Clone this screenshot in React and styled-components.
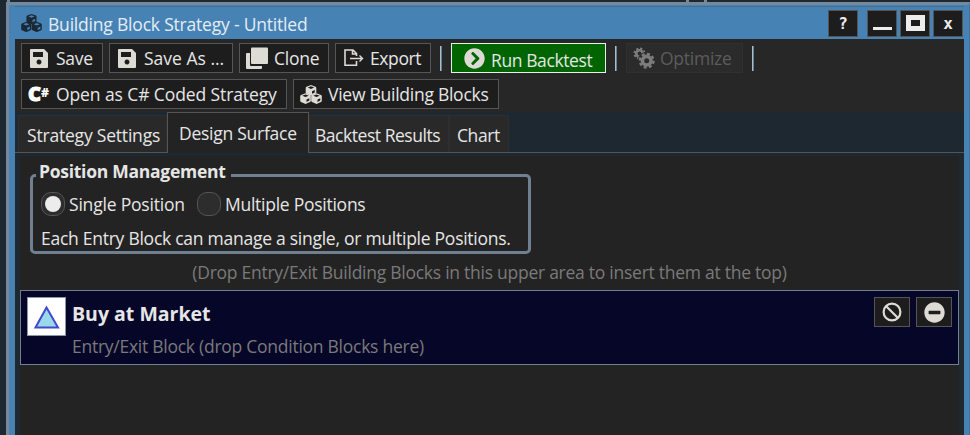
import React, { useState } from 'react';
import styled, { createGlobalStyle } from 'styled-components';
import { FaChevronCircleRight, FaMinusCircle } from 'react-icons/fa';

const GlobalStyle = createGlobalStyle`
  * {
    box-sizing: border-box;
  }
  body {
    margin: 0;
    background: #1e2830;
    font-family: 'Open Sans', 'Noto Sans', sans-serif;
    overflow: hidden;
  }
  button {
    font-family: inherit;
  }
`;

const Desktop = styled.div`
  height: 435px;
  padding-left: 6px;
  background: #1e2830;
`;

const BackgroundEdge = styled.div`
  display: flex;
  height: 2px;
  padding-left: 1px;
`;

const EdgeMark = styled.div`
  width: 3px;
  margin-right: ${({ $gap }) => $gap || 0}px;
  background: #778899;
`;

const Window = styled.div`
  display: flex;
  flex-direction: column;
  width: 964px;
  height: 433px;
  border-top: 3px solid #778899;
  border-left: 3px solid #778899;
  border-right: 1px solid #41709a;
  padding: 1px 5px 0 6px;
  background: #4682b4;
`;

const TitleBar = styled.div`
  display: flex;
  align-items: center;
  gap: 6px;
  height: 33px;
  flex: none;
  padding: 0 0 0 6px;
  border-top: 1px solid #3d6f99;
  color: #1c2834;
`;

const Label = styled.span`
  display: block;
  font-size: ${({ $size }) => $size || 17.5}px;
  line-height: ${({ $line }) => $line || 24}px;
  font-weight: ${({ $bold }) => ($bold ? 700 : 400)};
  letter-spacing: ${({ $track }) => $track ?? -0.26}px;
  padding-top: ${({ $drop }) => $drop || 0}px;
  color: ${({ $color }) => $color || '#e6e6e6'};
  white-space: nowrap;
`;

const WindowButtons = styled.div`
  display: flex;
  margin: 0 1px 0 auto;
`;

const WindowButton = styled.button`
  display: flex;
  align-items: center;
  justify-content: center;
  width: 30px;
  height: 27px;
  padding: 0;
  margin-left: ${({ $gap }) => $gap || 0}px;
  background: #1d1d1d;
  border: 1px solid #555;
  color: #ececec;
  font: 700 16px 'DejaVu Sans Mono', monospace;
`;

const Client = styled.div`
  display: flex;
  flex-direction: column;
  flex: 1;
  background: #272727;
`;

const Toolbar = styled.div`
  display: flex;
  flex-direction: column;
  gap: 6px;
  height: 73px;
  flex: none;
  padding: 4px 6px 0;
`;

const ToolRow = styled.div`
  display: flex;
  align-items: center;
  gap: 6px;
`;

const ToolButton = styled.button`
  display: flex;
  align-items: center;
  width: ${({ $width }) => $width}px;
  height: 30px;
  padding: 0 0 0 ${({ $pad }) => $pad || 6}px;
  gap: ${({ $gap }) => $gap || 8}px;
  color: #dedbd5;
  background: ${({ $run }) => ($run ? '#006400' : '#1d1d1d')};
  border: 1px solid ${({ $run }) => ($run ? '#e8f0e8' : '#555')};
  svg {
    flex: none;
  }
  &:disabled {
    color: #7c7c7c;
    background: #2b2b2b;
    border-color: #303030;
  }
`;

const Separator = styled.div`
  width: 2px;
  height: 25px;
  margin: 0 3px;
  background: #6d7d90;
  border-left: 1px solid #a9bccf;
`;

const CSharp = styled.span`
  display: flex;
  align-items: flex-start;
  width: 22px;
  height: 24px;
  color: #fff;
  font-weight: 800;
  font-size: 20px;
  line-height: 24px;
  -webkit-text-stroke: 1px #fff;
`;

const Sharp = styled.span`
  font-size: 12px;
  line-height: 22px;
  -webkit-text-stroke: 0;
`;

const TabStrip = styled.div`
  display: flex;
  align-items: flex-end;
  height: 41px;
  flex: none;
  padding-left: 3px;
  background: #1e2830;
  border-bottom: 1px solid #555;
`;

const Tab = styled.button`
  width: ${({ $width }) => $width}px;
  height: ${({ $active }) => ($active ? 41 : 37)}px;
  margin-bottom: ${({ $active }) => ($active ? -1 : 0)}px;
  padding: ${({ $active }) => ($active ? 0 : 1)}px 0 0 ${({ $pad }) => $pad}px;
  text-align: left;
  background: ${({ $active }) => ($active ? '#232323' : '#292929')};
  border: 1px solid ${({ $active }) => ($active ? '#555' : '#2e2e2e')};
  border-bottom: none;
`;

const Pane = styled.div`
  flex: 1;
  border: 3px solid #1e2830;
  border-width: 3px 4px 0;
  margin: 0 1px;
  background: #232323;
`;

const GroupBox = styled.fieldset`
  width: 501px;
  height: 89px;
  margin: 9px 0 0 10px;
  padding: 0 0 0 8px;
  min-width: 0;
  border: 3px solid #708090;
  border-radius: 5px;
`;

const Legend = styled.legend`
  height: 21px;
  margin-left: -5px;
  padding: 0 5px 0 3px;
`;

const RadioRow = styled.div`
  display: flex;
  align-items: center;
  height: 24px;
  margin-top: 6px;
`;

const RadioItem = styled.div`
  display: flex;
  align-items: center;
  width: ${({ $width }) => $width}px;
`;

const Radio = styled.button`
  display: flex;
  align-items: center;
  justify-content: center;
  width: 24px;
  height: 24px;
  padding: 0;
  margin-right: 4px;
  background: #2d2d2d;
  border: 1px solid #555;
  border-radius: 10px;
`;

const Dot = styled.span`
  width: 16px;
  height: 16px;
  border-radius: 50%;
  background: #ececec;
`;

const Note = styled.div`
  display: flex;
  margin-top: 10px;
`;

const DropHint = styled.div`
  display: flex;
  justify-content: center;
  height: 30px;
  margin-top: 6px;
`;

const Block = styled.div`
  display: flex;
  height: 75px;
  padding: 6px;
  background: #060628;
  border: 1px solid #708090;
`;

const BlockIcon = styled.div`
  width: 39px;
  height: 39px;
  background: white;
  border: 1px solid #8d95ab;
`;

const BlockText = styled.div`
  display: flex;
  flex-direction: column;
  gap: 8px;
  margin: 5px auto 0 6px;
`;

const BlockButton = styled.button`
  display: flex;
  align-items: center;
  justify-content: center;
  width: 36px;
  height: 30px;
  padding: 0;
  margin-left: 6px;
  color: #dedbd5;
  background: #1d1d1d;
  border: 1px solid #555;
`;

const SaveIcon = () => (
  <svg width="18" height="19" viewBox="0 0 18 19">
    <path
      fill="currentColor"
      fillRule="evenodd"
      d="M1 0h13l4 4v14q0 1-1 1H1q-1 0-1-1V1q0-1 1-1zM3 3v5h10V3zM9 10.500a2.500 2.500 0 1 0 .01 0z"
    />
  </svg>
);

const CloneIcon = () => (
  <svg width="22" height="22" viewBox="0 0 22 22">
    <path fill="currentColor" d="M1 6h3v12q0 1 1 1h11v2q0 1-1 1H1q-1 0-1-1V7q0-1 1-1z" />
    <rect x="5" y="0.5" width="17" height="16.5" rx="1" fill="currentColor" />
  </svg>
);

const ExportIcon = () => (
  <svg width="20" height="18" viewBox="0 0 20 18" fill="none" stroke="currentColor" strokeWidth="1.6">
    <path d="M12.500 12v4.200H1V1h8l3.500 3.500V7M8.500 1v4h4" />
    <path d="M6 9.500h12M15.500 6.500l3 3-3 3" strokeWidth="1.400" />
  </svg>
);

// one solid cube, with an opening in its top and right faces
const cube =
  'M5.500 0L10 1.700Q10.800 2 10.800 3V7.600Q10.800 8.400 10 8.800L5.500 10.800L1 8.800Q.2 8.400 .2 7.600V3Q.2 2 1 1.700z' +
  'M5.500 1.300L2.300 2.600L5.500 3.900L8.700 2.600zM6.500 6.300V8.700L9.300 7.400V5z';

const CubesIcon = ({ size = 21 }) => (
  <svg width={size} height={(size * 19) / 22} viewBox="0 0 22 19" fill="currentColor" fillRule="evenodd">
    <path d={cube} transform="translate(5.500 0)" />
    <path d={cube} transform="translate(0 8.200)" />
    <path d={cube} transform="translate(11 8.200)" />
  </svg>
);

const GearsIcon = () => (
  <svg width="22" height="22" viewBox="0 0 22 22" fill="none" stroke="currentColor">
    <circle cx="6.500" cy="6.500" r="3.200" strokeWidth="2.600" />
    <circle cx="6.500" cy="6.500" r="5" strokeWidth="2" strokeDasharray="2.240 1.687" />
    <circle cx="13.700" cy="13.700" r="7" stroke="#2b2b2b" strokeWidth="4" />
    <circle cx="13.700" cy="13.700" r="4.300" strokeWidth="3.600" />
    <circle cx="13.700" cy="13.700" r="6.800" strokeWidth="2.400" strokeDasharray="3.040 2.300" />
  </svg>
);

const BanIcon = () => (
  <svg width="20" height="20" viewBox="0 0 20 20" fill="none" stroke="currentColor" strokeWidth="2.200">
    <circle cx="10" cy="10" r="8.400" />
    <path d="M4 4l12 12" />
  </svg>
);

const BuyIcon = () => (
  <svg width="37" height="37" viewBox="0 0 37 37">
    <path d="M18.500 9.500L30 29.500H7.500z" fill="#9ad9ea" stroke="#4348cc" strokeWidth="2" />
  </svg>
);

const MinimizeIcon = () => (
  <svg width="19" height="18">
    <rect y="13" width="19" height="3" fill="#ececec" />
  </svg>
);

const MaximizeIcon = () => (
  <svg width="19" height="16">
    <rect x="2.500" y="2.500" width="14" height="11" fill="none" stroke="#ececec" strokeWidth="5" />
  </svg>
);

const tabs = [
  { name: 'Strategy Settings', width: 149, pad: 8, track: -0.2 },
  { name: 'Design Surface', width: 142, pad: 11, track: -0.26 },
  { name: 'Backtest Results', width: 140, pad: 5, track: -0.46 },
  { name: 'Chart', width: 60, pad: 7, track: -0.4 },
];

export default function App() {
  const [activeTab, setActiveTab] = useState('Design Surface');
  const [multiple, setMultiple] = useState(false);

  return (
    <Desktop>
      <GlobalStyle />
      <BackgroundEdge>
        <EdgeMark $gap={676} />
        <EdgeMark $gap={15} />
        <EdgeMark />
      </BackgroundEdge>
      <Window>
        <TitleBar>
          <CubesIcon />
          <Label $color="#e4edf5" $track={-0.2} $drop={1}>Building Block Strategy - Untitled</Label>
          <WindowButtons>
            <WindowButton>?</WindowButton>
            <WindowButton $gap={9}>
              <MinimizeIcon />
            </WindowButton>
            <WindowButton $gap={3}>
              <MaximizeIcon />
            </WindowButton>
            <WindowButton $gap={3}>x</WindowButton>
          </WindowButtons>
        </TitleBar>
        <Client>
          <Toolbar>
            <ToolRow>
              <ToolButton $width={82} $pad={8}>
                <SaveIcon />
                <Label>Save</Label>
              </ToolButton>
              <ToolButton $width={124} $pad={8}>
                <SaveIcon />
                <Label $track={0}>Save As ...</Label>
              </ToolButton>
              <ToolButton $width={90} $gap={6}>
                <CloneIcon />
                <Label>Clone</Label>
              </ToolButton>
              <ToolButton $width={96} $pad={8} $gap={6}>
                <ExportIcon />
                <Label $track={-0.4}>Export</Label>
              </ToolButton>
              <Separator />
              <ToolButton $width={155} $pad={12} $gap={6} $run>
                <FaChevronCircleRight size={21} />
                <Label $drop={3} $track={-0.4}>Run Backtest</Label>
              </ToolButton>
              <Separator />
              <ToolButton $width={117} $pad={6} $gap={5} disabled>
                <GearsIcon />
                <Label $color="#5c5c5c">Optimize</Label>
              </ToolButton>
              <Separator />
            </ToolRow>
            <ToolRow>
              <ToolButton $width={266} $gap={6}>
                <CSharp>
                  C<Sharp>#</Sharp>
                </CSharp>
                <Label $track={-0.1}>Open as C# Coded Strategy</Label>
              </ToolButton>
              <ToolButton $width={206} $gap={6}>
                <CubesIcon size={22} />
                <Label>View Building Blocks</Label>
              </ToolButton>
            </ToolRow>
          </Toolbar>
          <TabStrip>
            {tabs.map((tab) => (
              <Tab
                key={tab.name}
                $width={tab.width}
                $pad={tab.pad}
                $active={tab.name === activeTab}
                onClick={() => setActiveTab(tab.name)}
              >
                <Label $track={tab.track}>{tab.name}</Label>
              </Tab>
            ))}
          </TabStrip>
          <Pane>
            <GroupBox>
              <Legend>
                <Label $bold $line={13} $track={-0.27}>Position Management</Label>
              </Legend>
              <RadioRow>
                <RadioItem $width={156}>
                  <Radio onClick={() => setMultiple(false)}>{!multiple && <Dot />}</Radio>
                  <Label $track={-0.2}>Single Position</Label>
                </RadioItem>
                <RadioItem>
                  <Radio onClick={() => setMultiple(true)}>{multiple && <Dot />}</Radio>
                  <Label>Multiple Positions</Label>
                </RadioItem>
              </RadioRow>
              <Note>
                <Label>Each Entry Block can manage a single, or multiple Positions.</Label>
              </Note>
            </GroupBox>
            <DropHint>
              <Label $color="#7a7a7a">
                (Drop Entry/Exit Building Blocks in this upper area to insert them at the top)
              </Label>
            </DropHint>
            <Block>
              <BlockIcon>
                <BuyIcon />
              </BlockIcon>
              <BlockText>
                <Label $bold $size={19.5} $track={0}>Buy at Market</Label>
                <Label $color="#7a7a7a">Entry/Exit Block (drop Condition Blocks here)</Label>
              </BlockText>
              <BlockButton>
                <BanIcon />
              </BlockButton>
              <BlockButton>
                <FaMinusCircle size={21} />
              </BlockButton>
            </Block>
          </Pane>
        </Client>
      </Window>
    </Desktop>
  );
}
